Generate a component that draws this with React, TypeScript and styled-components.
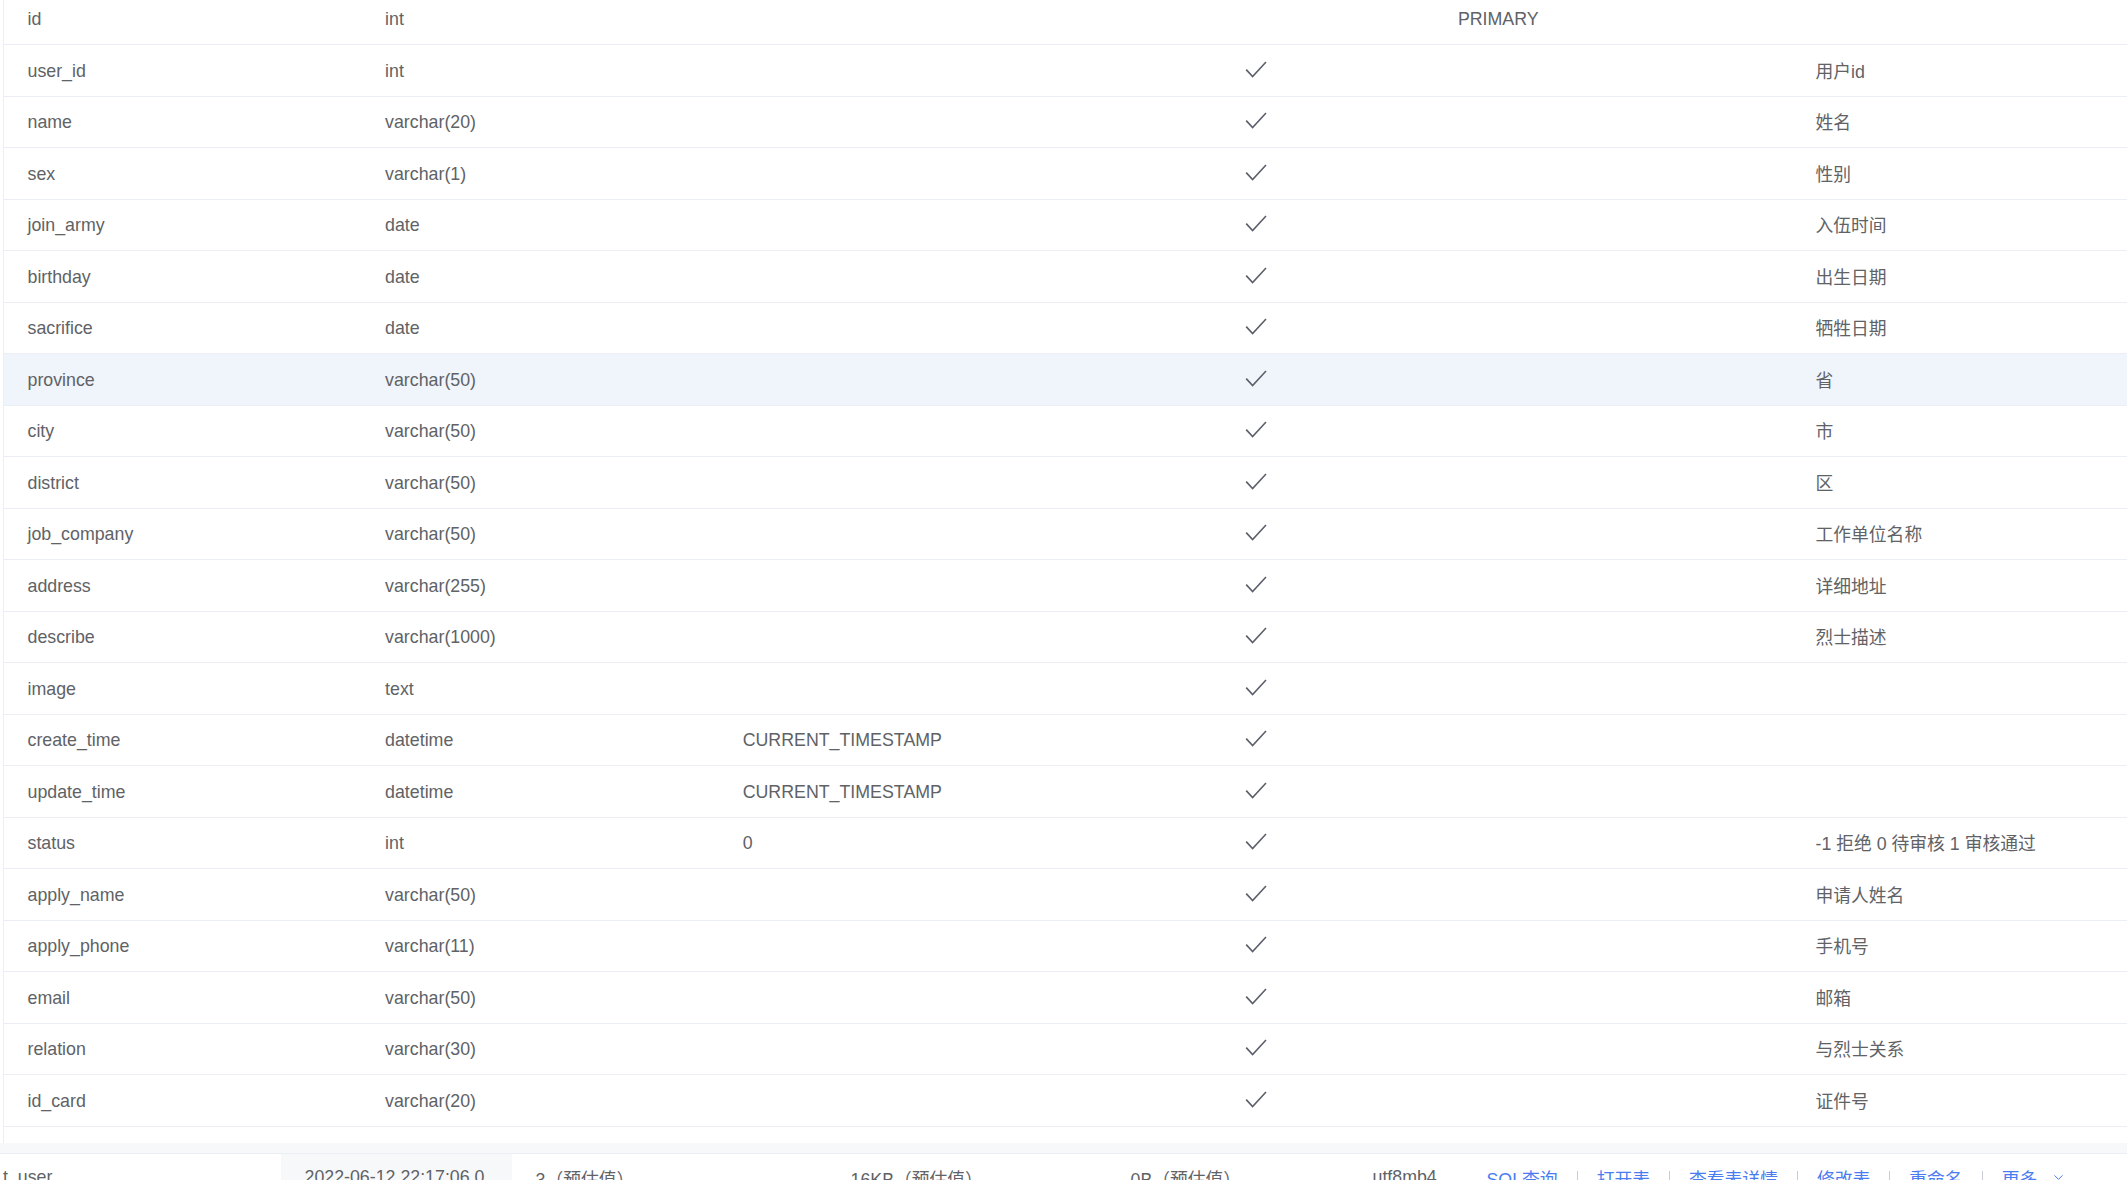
import React from "react";
import styled, { createGlobalStyle } from "styled-components";
import { ChevronDown } from "lucide-react";

const GlobalStyle = createGlobalStyle`
  html, body {
    margin: 0;
    padding: 0;
    background: #ffffff;
    overflow: hidden;
  }
  body {
    font-family: "Liberation Sans", Arial, "Noto Sans CJK SC", sans-serif;
    color: #606266;
  }
  * { box-sizing: border-box; }
`;

const Page = styled.div`
  width: 2127px;
  height: 1180px;
  overflow: hidden;
  display: flex;
  flex-direction: column;
`;

const FieldsCard = styled.div`
  margin-top: -6.2px;
  margin-left: 3px;
  border-left: 1px solid #ebeef5;
  padding-bottom: 16px;
  background: #ffffff;
  flex: none;
`;

const FieldRow = styled.div<{ $hover?: boolean }>`
  display: grid;
  grid-template-columns: repeat(6, 357.6px);
  height: 51.5px;
  border-bottom: 1px solid #ebeef5;
  background: ${(p) => (p.$hover ? "#f0f4fb" : "#ffffff")};
  font-size: 17.8px;
  color: #606266;
`;

const Cell = styled.div<{ $center?: boolean; $cjk?: boolean }>`
  display: flex;
  align-items: center;
  justify-content: ${(p) => (p.$center ? "center" : "flex-start")};
  padding-left: ${(p) => (p.$center ? "0" : "23.5px")};
  padding-top: ${(p) => (p.$cjk ? "0" : "1px")};
  padding-bottom: ${(p) => (p.$cjk ? "2px" : "0")};
  white-space: nowrap;
  overflow: hidden;
`;

const CheckIcon = styled.svg`
  width: 22px;
  height: 17px;
  margin-bottom: 4px;
  display: block;
`;

const Gap = styled.div`
  height: 11px;
  background: #f7f8fa;
  border-bottom: 1px solid #ebeef5;
  flex: none;
`;

const TableListRow = styled.div`
  display: grid;
  grid-template-columns: 281px 231px 315px 280px 242px 114px 1fr;
  height: 52px;
  font-size: 17.8px;
  color: #606266;
  flex: none;
`;

const ListCell = styled.div<{ $shade?: boolean; $pad?: number }>`
  display: flex;
  align-items: center;
  padding-left: ${(p) => (p.$pad ?? 23.5)}px;
  padding-bottom: 4px;
  background: ${(p) => (p.$shade ? "#f7f8fa" : "transparent")};
  white-space: nowrap;
  overflow: hidden;
`;

const Actions = styled.div`
  display: flex;
  align-items: center;
  padding-left: 23.5px;
  padding-bottom: 4px;
  white-space: nowrap;
`;

const ActionLink = styled.span`
  color: #4a7cf0;
  cursor: pointer;
  display: inline-flex;
  align-items: center;
`;

const Divider = styled.span`
  display: inline-block;
  width: 1px;
  height: 14px;
  background: #c8ccd4;
  margin: 0 19px;
`;

const MoreChevron = styled(ChevronDown)`
  margin-left: 14px;
`;

type Field = {
  name: string;
  type: string;
  def?: string;
  notNull: boolean;
  key?: string;
  comment?: string;
};

const fields: Field[] = [
  { name: "id", type: "int", notNull: false, key: "PRIMARY" },
  { name: "user_id", type: "int", notNull: true, comment: "用户id" },
  { name: "name", type: "varchar(20)", notNull: true, comment: "姓名" },
  { name: "sex", type: "varchar(1)", notNull: true, comment: "性别" },
  { name: "join_army", type: "date", notNull: true, comment: "入伍时间" },
  { name: "birthday", type: "date", notNull: true, comment: "出生日期" },
  { name: "sacrifice", type: "date", notNull: true, comment: "牺牲日期" },
  { name: "province", type: "varchar(50)", notNull: true, comment: "省" },
  { name: "city", type: "varchar(50)", notNull: true, comment: "市" },
  { name: "district", type: "varchar(50)", notNull: true, comment: "区" },
  { name: "job_company", type: "varchar(50)", notNull: true, comment: "工作单位名称" },
  { name: "address", type: "varchar(255)", notNull: true, comment: "详细地址" },
  { name: "describe", type: "varchar(1000)", notNull: true, comment: "烈士描述" },
  { name: "image", type: "text", notNull: true },
  { name: "create_time", type: "datetime", def: "CURRENT_TIMESTAMP", notNull: true },
  { name: "update_time", type: "datetime", def: "CURRENT_TIMESTAMP", notNull: true },
  { name: "status", type: "int", def: "0", notNull: true, comment: "-1 拒绝 0 待审核 1 审核通过" },
  { name: "apply_name", type: "varchar(50)", notNull: true, comment: "申请人姓名" },
  { name: "apply_phone", type: "varchar(11)", notNull: true, comment: "手机号" },
  { name: "email", type: "varchar(50)", notNull: true, comment: "邮箱" },
  { name: "relation", type: "varchar(30)", notNull: true, comment: "与烈士关系" },
  { name: "id_card", type: "varchar(20)", notNull: true, comment: "证件号" },
];

const Check = () => (
  <CheckIcon viewBox="0 0 22 17" fill="none">
    <polyline
      points="1.2,8.6 7.6,15.6 21,1"
      stroke="#5b5f6b"
      strokeWidth="1.6"
      strokeLinecap="butt"
      strokeLinejoin="miter"
    />
  </CheckIcon>
);

const actions = ["SQL查询", "打开表", "查看表详情", "修改表", "重命名"];

export default function App() {
  return (
    <>
      <GlobalStyle />
      <Page>
        <FieldsCard>
          {fields.map((f) => (
            <FieldRow key={f.name} $hover={f.name === "province"}>
              <Cell>{f.name}</Cell>
              <Cell>{f.type}</Cell>
              <Cell>{f.def ?? ""}</Cell>
              <Cell $center>{f.notNull ? <Check /> : null}</Cell>
              <Cell>{f.key ?? ""}</Cell>
              <Cell $cjk>{f.comment ?? ""}</Cell>
            </FieldRow>
          ))}
        </FieldsCard>
        <Gap />
        <TableListRow>
          <ListCell $pad={3}>t_user</ListCell>
          <ListCell $shade>2022-06-12 22:17:06.0</ListCell>
          <ListCell>3（预估值）</ListCell>
          <ListCell>16KB（预估值）</ListCell>
          <ListCell>0B（预估值）</ListCell>
          <ListCell>utf8mb4</ListCell>
          <Actions>
            {actions.map((a) => (
              <React.Fragment key={a}>
                <ActionLink>{a}</ActionLink>
                <Divider />
              </React.Fragment>
            ))}
            <ActionLink>
              更多
              <MoreChevron size={15} strokeWidth={1.6} />
            </ActionLink>
          </Actions>
        </TableListRow>
      </Page>
    </>
  );
}
